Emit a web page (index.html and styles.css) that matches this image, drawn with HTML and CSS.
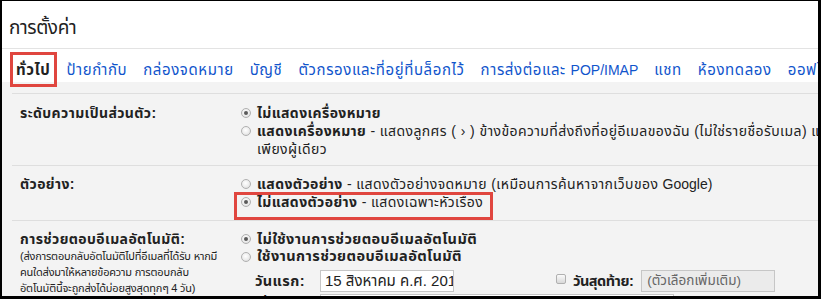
FILE: index.html
```html
<!DOCTYPE html>
<html lang="th">
<head>
<meta charset="utf-8">
<link rel="stylesheet" href="styles.css">
</head>
<body>
<div class="frame">
  <div class="title">การตั้งค่า</div>
  <div class="tabs">
    <span class="tab active">ทั่วไป</span>
    <span class="tab">ป้ายกำกับ</span>
    <span class="tab">กล่องจดหมาย</span>
    <span class="tab">บัญชี</span>
    <span class="tab">ตัวกรองและที่อยู่ที่บล็อกไว้</span>
    <span class="tab">การส่งต่อและ <span class="latin">POP/IMAP</span></span>
    <span class="tab">แชท</span>
    <span class="tab">ห้องทดลอง</span>
    <span class="tab">ออฟไลน์</span>
    <span class="annot tab-box"></span>
  </div>
  <div class="content">
    <div class="row r1">
      <div class="label"><b>ระดับความเป็นส่วนตัว:</b></div>
      <div class="value">
        <div class="opt"><span class="radio on"></span><b>ไม่แสดงเครื่องหมาย</b></div>
        <div class="opt"><span class="radio"></span><span><b>แสดงเครื่องหมาย</b> - แสดงลูกศร ( › ) ข้างข้อความที่ส่งถึงที่อยู่อีเมลของฉัน (ไม่ใช่รายชื่อรับเมล) และ</span></div>
        <div class="opt cont">เพียงผู้เดียว</div>
      </div>
    </div>
    <div class="row r2">
      <div class="label"><b>ตัวอย่าง:</b></div>
      <div class="value">
        <div class="opt"><span class="radio"></span><span><b>แสดงตัวอย่าง</b> - แสดงตัวอย่างจดหมาย (เหมือนการค้นหาจากเว็บของ <span class="latin">Google</span>)</span></div>
        <div class="opt"><span class="radio on"></span><span><b>ไม่แสดงตัวอย่าง</b> - แสดงเฉพาะหัวเรื่อง</span><span class="annot opt-box"></span></div>
      </div>
    </div>
    <div class="row r3">
      <div class="label">
        <b>การช่วยตอบอีเมลอัตโนมัติ:</b>
        <div class="note">(ส่งการตอบกลับอัตโนมัติไปที่อีเมลที่ได้รับ หากมี<br>คนใดส่งมาให้หลายข้อความ การตอบกลับ<br>อัตโนมัตินี้จะถูกส่งได้บ่อยสูงสุดทุกๆ 4 วัน)<br><span class="more">เรียนรู้เพิ่มเติม</span></div>
      </div>
      <div class="value big">
        <div class="opt"><span class="radio on"></span><b>ไม่ใช้งานการช่วยตอบอีเมลอัตโนมัติ</b></div>
        <div class="opt"><span class="radio"></span><b>ใช้งานการช่วยตอบอีเมลอัตโนมัติ</b></div>
        <div class="field dates">
          <b class="flabel">วันแรก:</b>
          <span class="input">15 สิงหาคม ค.ศ. 2015</span>
          <span class="check"></span>
          <b class="flabel2">วันสุดท้าย:</b>
          <span class="input disabled">(ตัวเลือกเพิ่มเติม)</span>
        </div>
        <div class="field">
          <b class="flabel">เรื่อง:</b>
          <span class="input wide"></span>
        </div>
      </div>
    </div>
  </div>
</div>
</body>
</html>
```

FILE: styles.css
```css
html, body {
  margin: 0;
  padding: 0;
  background: #fff;
}
.frame {
  position: relative;
  width: 821px;
  height: 299px;
  box-sizing: border-box;
  border-style: solid;
  border-color: #000;
  border-width: 1px 3px 3px 2px;
  overflow: hidden;
  font-family: "Liberation Sans", "Noto Sans Thai", sans-serif;
  color: #222;
  font-size: 14px;
  white-space: nowrap;
}
.latin {
  letter-spacing: 0;
}
.title {
  height: 48px;
  box-sizing: border-box;
  padding: 15px 0 0 7px;
  font-size: 19px;
  line-height: 24px;
  letter-spacing: -0.4px;
  color: #222;
  border-bottom: 1px solid #e3e3e3;
}
.tabs {
  position: relative;
  display: flex;
  height: 33px;
  box-sizing: border-box;
  padding: 12px 0 0 14px;
  gap: 16px;
  line-height: 18px;
}
.tab {
  font-size: 15px;
  letter-spacing: 0.6px;
  color: #1155cc;
}
.tab .latin {
  font-size: 14px;
}
.tab.active {
  color: #222;
  font-weight: bold;
}
.annot {
  position: absolute;
  border: 3px solid #e0463f;
  box-sizing: border-box;
}
.tab-box {
  left: 8px;
  top: 3px;
  width: 47px;
  height: 35px;
}
.content {
  background: #f3f3f3;
  padding: 11px 0 40px 10px;
}
.row {
  display: grid;
  grid-template-columns: 229px 1fr;
  border-top: 1px solid #dedede;
  line-height: 18px;
  letter-spacing: 0.4px;
}
.r1 { padding: 10px 0 7px; }
.r2 { padding: 9px 0 9px; }
.r3 { padding: 9px 0 0; }
.label {
  padding-left: 8px;
}
.note {
  font-size: 11px;
  line-height: 16px;
  letter-spacing: -0.2px;
  color: #222;
}
.more {
  color: #1155cc;
}
.opt {
  position: relative;
  display: flex;
  align-items: center;
  gap: 6px;
}
.opt.cont {
  padding-left: 16px;
}
.radio {
  flex: none;
  width: 10px;
  height: 10px;
  border-radius: 50%;
  box-sizing: border-box;
  border: 1px solid #b0b0b0;
  background: radial-gradient(circle at 45% 40%, #ffffff 0%, #ececec 55%, #d2d2d2 100%);
  position: relative;
}
.radio.on::after {
  content: "";
  position: absolute;
  left: 2px;
  top: 2px;
  width: 4px;
  height: 4px;
  border-radius: 50%;
  background: #5a5a5a;
}
.opt-box {
  left: -7px;
  top: -1px;
  width: 259px;
  height: 28px;
}
.value.big {
  font-size: 14.5px;
  line-height: 17px;
}
.big .opt:first-child {
  line-height: 18px;
}
.field {
  display: flex;
  align-items: center;
  height: 22px;
  margin-top: 2px;
  padding-left: 14px;
}
.field.dates {
  margin-top: 5px;
}
.flabel {
  width: 65px;
  flex: none;
}
.flabel2 {
  margin: 0 8px 0 7px;
  letter-spacing: -0.5px;
}
.input {
  display: inline-block;
  flex: none;
  box-sizing: border-box;
  height: 22px;
  width: 134px;
  border: 1px solid #c6c6c6;
  background: #fff;
  font-size: 15px;
  line-height: 20px;
  padding-left: 4px;
  letter-spacing: 0;
  overflow: hidden;
}
.input.disabled {
  background: #ebebeb;
  color: #666;
  font-size: 13.5px;
  padding-left: 5px;
}
.input.wide {
  width: 354px;
}
.check {
  flex: none;
  width: 10px;
  height: 10px;
  box-sizing: border-box;
  border: 1px solid #b0b0b0;
  border-radius: 2px;
  background: linear-gradient(#fafafa, #d8d8d8);
  margin: -4px 0 0 102px;
}
```
